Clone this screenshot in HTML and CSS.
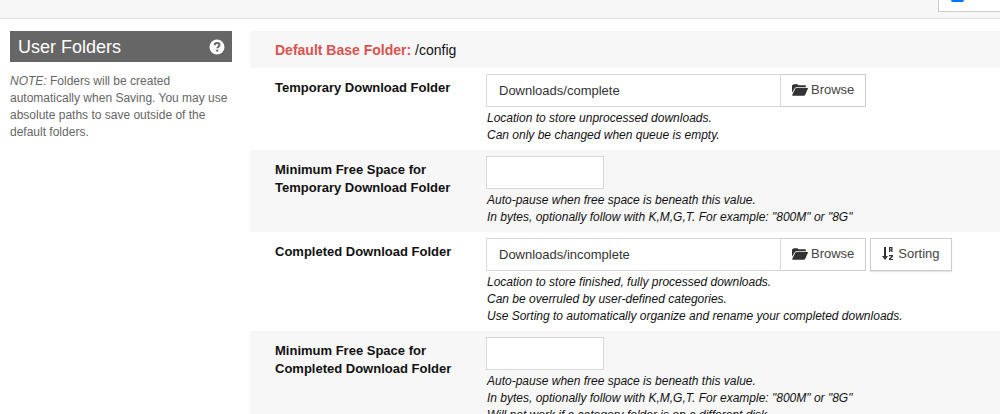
FILE: index.html
```
<!DOCTYPE html>
<html lang="en">
<head>
  <meta charset="UTF-8">
  <meta name="viewport" content="width=device-width, initial-scale=1.0">
  <title>Folders</title>
  <link rel="stylesheet" href="styles.css">
</head>
<body>
  <svg width="0" height="0" class="symbols" aria-hidden="true">
    <symbol id="icon-folder" viewBox="0 0 16 12">
      <path d="M0 8.8V2C0 1.4.4 1 1 1l.6-.7h4l.7 1h6.5c.7 0 1.1.4 1.1 1v.9H4.4c-.8 0-1.3.3-1.7 1z"/>
      <path d="M4.6 4h10.8c.6 0 .7.3.5.8l-2.8 6.3c-.2.5-.6.7-1.1.7H.7c-.5 0-.7-.3-.5-.8l3-6.2c.3-.5.7-.8 1.4-.8z"/>
    </symbol>
    <symbol id="icon-sort" viewBox="0 0 12 14">
      <path d="M2 0h2v9h2l-3 4-3-4h2z"/>
      <path fill-rule="evenodd" d="M7 0h3.5v5H9.2V3.6h-.9V5H7zm1.3 1.1v1.4h.9V1.1z"/>
      <path d="M7 8h4v1.4l-2.4 2.5H11V13H7v-1.3l2.4-2.5H7z"/>
    </symbol>
  </svg>

  <div class="topbar">
    <label class="advanced"><input type="checkbox" aria-label="Advanced Settings" checked></label>
  </div>

  <div class="section">
    <div class="sidebar">
      <div class="heading">
        <h3>User Folders</h3>
        <a href="#help" aria-label="Help">
          <svg width="16" height="16" viewBox="0 0 16 16">
            <circle cx="8" cy="8" r="7.5" fill="#fff"/>
            <path d="M5.7 6.3C5.7 4.8 6.7 4 8.1 4s2.4.9 2.4 2.1c0 1.6-2.2 1.7-2.2 3.2" fill="none" stroke="#666" stroke-width="2"/>
            <path d="M7.2 10.6h2.1v2H7.2z" fill="#666"/>
          </svg>
        </a>
      </div>
      <p class="note"><em>NOTE:</em> Folders will be created automatically when Saving. You may use absolute paths to save outside of the default folders.</p>
    </div>

    <form class="fields">
      <div class="row base">
        <p><strong>Default Base Folder:</strong> /config</p>
      </div>

      <div class="row">
        <label for="download_dir">Temporary Download Folder</label>
        <div class="value">
          <div class="controls">
            <div class="group">
              <input type="text" id="download_dir" class="path" value="Downloads/complete">
              <button type="button" class="btn"><svg class="folder"><use href="#icon-folder"/></svg>Browse</button>
            </div>
          </div>
          <p class="desc">Location to store unprocessed downloads.<br>Can only be changed when queue is empty.</p>
        </div>
      </div>

      <div class="row">
        <label for="download_free">Minimum Free Space for Temporary Download Folder</label>
        <div class="value">
          <input type="text" id="download_free" class="size">
          <p class="desc">Auto-pause when free space is beneath this value.<br>In bytes, optionally follow with K,M,G,T. For example: "800M" or "8G"</p>
        </div>
      </div>

      <div class="row">
        <label for="complete_dir">Completed Download Folder</label>
        <div class="value">
          <div class="controls">
            <div class="group">
              <input type="text" id="complete_dir" class="path" value="Downloads/incomplete">
              <button type="button" class="btn"><svg class="folder"><use href="#icon-folder"/></svg>Browse</button>
            </div>
            <button type="button" class="btn sorting"><svg class="sort"><use href="#icon-sort"/></svg>Sorting</button>
          </div>
          <p class="desc">Location to store finished, fully processed downloads.<br>Can be overruled by user-defined categories.<br>Use Sorting to automatically organize and rename your completed downloads.</p>
        </div>
      </div>

      <div class="row">
        <label for="complete_free">Minimum Free Space for Completed Download Folder</label>
        <div class="value">
          <input type="text" id="complete_free" class="size">
          <p class="desc">Auto-pause when free space is beneath this value.<br>In bytes, optionally follow with K,M,G,T. For example: "800M" or "8G"<br>Will not work if a category folder is on a different disk.</p>
        </div>
      </div>
    </form>
  </div>
</body>
</html>
```

FILE: styles.css
```
* {
  box-sizing: border-box;
}
body {
  margin: 0;
  height: 100vh;
  overflow: hidden;
  font-family: "Liberation Sans", Arial, sans-serif;
  font-size: 13px;
  line-height: 18px;
  color: #111;
  background: #fff;
}
h3, p {
  margin: 0;
}
.symbols {
  position: absolute;
}
.topbar {
  display: flex;
  justify-content: flex-end;
  align-items: flex-end;
  height: 19px;
  padding-bottom: 6px;
  background: #f7f7f7;
  border-bottom: 1px solid #e2e2e2;
}
.advanced {
  display: flex;
  align-items: center;
  width: 62px;
  height: 33px;
  flex-shrink: 0;
  padding: 0 12px;
  background: #fff;
  border: 1px solid #ccc;
  border-right: none;
}
.advanced input {
  width: 13px;
  height: 13px;
  margin: 0;
  accent-color: #0075ff;
}
.section {
  display: flex;
  padding-top: 12px;
}
.sidebar {
  width: 250px;
  flex-shrink: 0;
  padding: 0 18px 0 10px;
}
.heading {
  display: flex;
  align-items: center;
  justify-content: space-between;
  height: 31px;
  padding: 0 7px 0 8px;
  background: #666;
}
.heading h3 {
  font-size: 18px;
  font-weight: normal;
  color: #fff;
}
.heading a, .heading svg {
  display: block;
}
.note {
  margin-top: 11px;
  font-size: 12px;
  line-height: 17px;
  color: #666;
}
.fields {
  flex: 1;
  min-width: 0;
}
.row {
  display: flex;
  padding: 6px 0 6px 25px;
}
.row:nth-child(odd) {
  background: #f7f7f7;
}
.base {
  padding: 10px 0 9px 25px;
  font-size: 14px;
}
.base strong {
  color: #d9534f;
}
.row label {
  width: 211px;
  flex-shrink: 0;
  padding: 5px 20px 0 0;
  font-weight: bold;
}
.value {
  flex: 1;
  min-width: 0;
}
.controls {
  display: flex;
  gap: 4px;
}
.group {
  display: flex;
}
input[type="text"] {
  display: block;
  height: 33px;
  padding: 0 12px;
  font: inherit;
  color: #333;
  background: #fff;
  border: 1px solid #d8d8d4;
}
.path {
  width: 295px;
}
.size {
  width: 118px;
}
.btn {
  display: flex;
  align-items: center;
  height: 33px;
  padding: 0 11px 2px;
  font: inherit;
  color: #444;
  background: #fff;
  border: 1px solid #ccc;
}
.group .btn {
  border-left: none;
}
.sorting {
  gap: 4px;
  box-shadow: 0 1px 1px rgba(0, 0, 0, 0.1);
}
.btn svg {
  fill: #333;
}
.folder {
  width: 16px;
  height: 12px;
  margin-right: 3px;
}
.sort {
  width: 12px;
  height: 14px;
}
.desc {
  margin-top: 3px;
  padding-left: 1px;
  font-size: 12px;
  font-style: italic;
  line-height: 17px;
}
```
